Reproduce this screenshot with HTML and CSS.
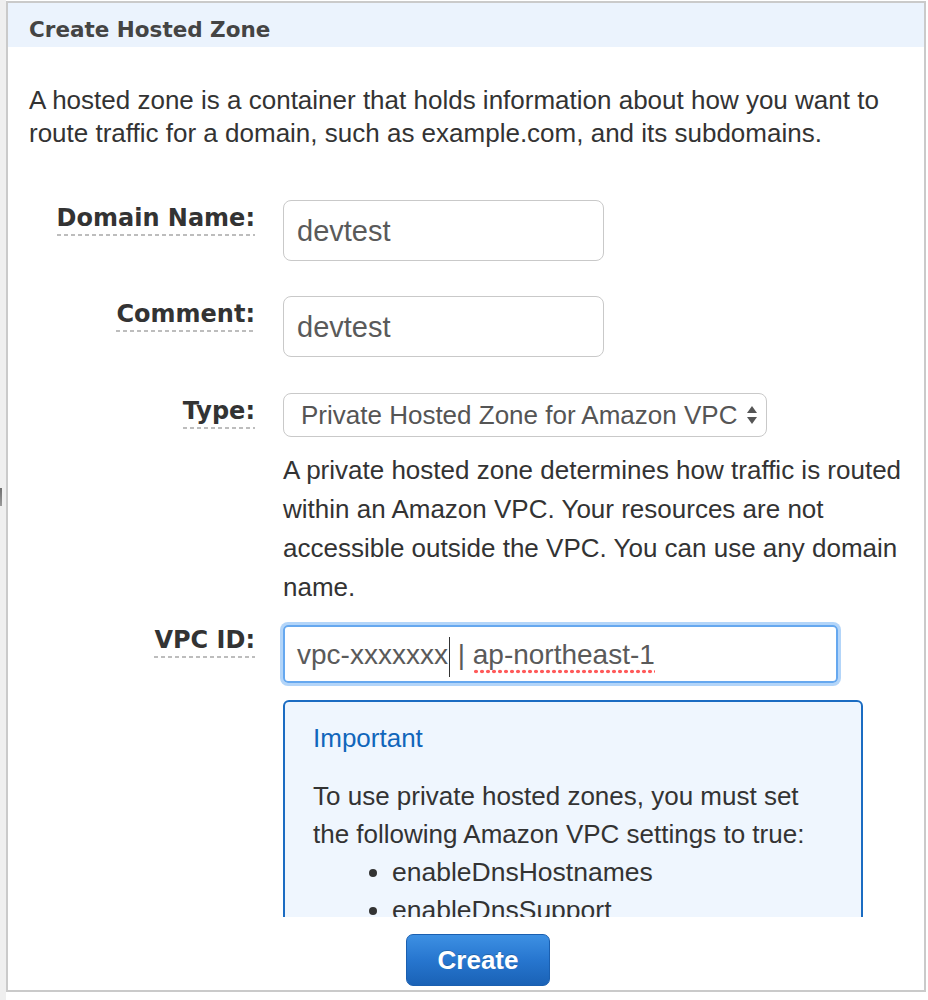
FILE: index.html
```html
<!DOCTYPE html>
<html lang="en">
<head>
<meta charset="utf-8">
<title>Create Hosted Zone</title>
<link rel="stylesheet" href="styles.css">
</head>
<body>
<div class="panel">
  <div class="panel-header"><h2 class="panel-title">Create Hosted Zone</h2></div>
  <div class="panel-body">
    <p class="intro">A hosted zone is a container that holds information about how you want to route traffic for a domain, such as example.com, and its subdomains.</p>

    <div class="field field-domain">
      <div class="label-cell"><span class="lbl">Domain Name:</span></div>
      <div class="ctrl"><div class="text-input">devtest</div></div>
    </div>

    <div class="field field-comment">
      <div class="label-cell"><span class="lbl">Comment:</span></div>
      <div class="ctrl"><div class="text-input">devtest</div></div>
    </div>

    <div class="field field-type">
      <div class="label-cell"><span class="lbl">Type:</span></div>
      <div class="ctrl">
        <div class="select">
          <span class="select-text">Private Hosted Zone for Amazon VPC</span>
          <svg class="select-arrows" width="12" height="20" viewBox="0 0 12 20"><path d="M6 1 L11 8 L1 8 Z" fill="#555"/><path d="M1 12 L11 12 L6 19 Z" fill="#555"/></svg>
        </div>
        <p class="help">A private hosted zone determines how traffic is routed within an Amazon VPC. Your resources are not accessible outside the VPC. You can use any domain name.</p>
      </div>
    </div>

    <div class="field field-vpc">
      <div class="label-cell"><span class="lbl">VPC ID:</span></div>
      <div class="ctrl">
        <div class="text-input focused">vpc-xxxxxxx<span class="caret"></span> | <span class="misspelled">ap-northeast-1</span></div>
        <div class="notice">
          <h3 class="notice-title">Important</h3>
          <p class="notice-text">To use private hosted zones, you must set the following Amazon VPC settings to true:</p>
          <ul class="notice-list">
            <li>enableDnsHostnames</li>
            <li>enableDnsSupport</li>
          </ul>
        </div>
      </div>
    </div>
  </div>
  <div class="panel-footer">
    <button class="btn-primary" type="button">Create</button>
  </div>
</div>
</body>
</html>
```

FILE: styles.css
```css
html, body {
  margin: 0;
  padding: 0;
}

body {
  width: 928px;
  height: 1000px;
  overflow: hidden;
  background:
    linear-gradient(#6f6f6f, #9a9a9a) 0 488px / 2px 18px no-repeat,
    linear-gradient(to right, #efefef 0, #efefef 6px, #ffffff 6px);
  font-family: "Liberation Sans", Arial, sans-serif;
  color: #333;
}

.panel {
  margin: 1px 0 0 6px;
  width: 920px;
  height: 991px;
  box-sizing: border-box;
  border: 2px solid #cacaca;
  background: #fff;
  display: flex;
  flex-direction: column;
}

.panel-header {
  height: 44px;
  flex: none;
  box-sizing: border-box;
  background: #ebf3fd;
  padding: 14px 21px 0;
}

.panel-title {
  margin: 0;
  font-family: "DejaVu Sans", Verdana, sans-serif;
  font-weight: bold;
  font-size: 21.5px;
  line-height: 26px;
  color: #444;
}

.panel-body {
  flex: 1;
  overflow: hidden;
}

.intro {
  margin: 37px 0 0;
  padding: 0 21px;
  font-size: 26px;
  line-height: 33px;
  color: #333;
}

.field {
  display: grid;
  grid-template-columns: 247px 1fr;
  column-gap: 28px;
  padding-right: 10px;
}

.field-domain { margin-top: 50px; }
.field-comment { margin-top: 35px; }
.field-type { margin-top: 36px; }
.field-vpc { margin-top: 18px; }

.label-cell {
  text-align: right;
  padding-top: 6px;
}

.lbl {
  display: inline-block;
  font-family: "DejaVu Sans", Verdana, sans-serif;
  font-weight: bold;
  font-size: 24px;
  line-height: 25px;
  color: #333;
  padding-bottom: 5px;
  background-image: linear-gradient(to right, #bdbdbd 0, #bdbdbd 4px, transparent 4px);
  background-size: 7px 2px;
  background-repeat: repeat-x;
  background-position: left bottom;
}

.field-vpc .label-cell {
  padding-top: 3px;
}

.text-input {
  box-sizing: border-box;
  width: 321px;
  height: 61px;
  border: 1px solid #c9c9c9;
  border-radius: 8px;
  padding: 0 13px;
  font-size: 29px;
  line-height: 60px;
  color: #5a5a5a;
  white-space: nowrap;
}

.text-input.focused {
  width: 555px;
  height: 58px;
  line-height: 55px;
  font-size: 28px;
  border: 2px solid #66a8ef;
  border-radius: 5px;
  box-shadow: 0 0 0 3px #b3d5f9;
  padding: 0 12px;
}

.caret {
  display: inline-block;
  width: 0;
  height: 40px;
  border-left: 1.5px solid #333;
  vertical-align: middle;
  margin-left: 1px;
}

.misspelled {
  padding-bottom: 4px;
  background-image: radial-gradient(circle, #ff5a5a 0, #ff5a5a 1.6px, transparent 2.1px);
  background-size: 6px 5px;
  background-repeat: repeat-x;
  background-position: left bottom;
}

.select {
  box-sizing: border-box;
  width: 484px;
  height: 44px;
  border: 1px solid #c9c9c9;
  border-radius: 8px;
  padding: 0 8px 0 17px;
  display: flex;
  align-items: center;
  justify-content: space-between;
  font-size: 26px;
  color: #555;
}

.select-text {
  line-height: 42px;
  white-space: nowrap;
}

.select-arrows {
  flex: none;
}

.help {
  margin: 14px 0 0;
  max-width: 630px;
  font-size: 26px;
  line-height: 39px;
  color: #333;
}

.notice {
  box-sizing: border-box;
  width: 580px;
  height: 260px;
  margin-top: 17px;
  border: 2px solid #1b6cc2;
  border-radius: 6px;
  background: #eff6fe;
  padding: 17px 26px 0 28px;
}

.notice-title {
  margin: 0;
  font-weight: normal;
  font-size: 26px;
  line-height: 38px;
  color: #1166bb;
}

.notice-text {
  margin: 20px 0 0;
  font-size: 26px;
  line-height: 38px;
  color: #333;
}

.notice-list {
  margin: 0;
  padding-left: 79px;
  font-size: 26.5px;
  line-height: 38px;
  color: #333;
}

.panel-footer {
  flex: none;
  height: 73px;
  box-sizing: border-box;
  padding: 17px 0 0 398px;
}

.btn-primary {
  display: block;
  width: 144px;
  height: 52px;
  margin: 0;
  padding: 0;
  border: 1px solid #1a5fb0;
  border-radius: 7px;
  background: linear-gradient(to bottom, #3d90e3 0%, #2776cf 50%, #1a62b6 100%);
  font-family: "Liberation Sans", Arial, sans-serif;
  font-weight: bold;
  font-size: 26px;
  color: #fff;
  text-shadow: 0 -1px 0 rgba(0, 0, 0, 0.2);
  cursor: pointer;
}
```
